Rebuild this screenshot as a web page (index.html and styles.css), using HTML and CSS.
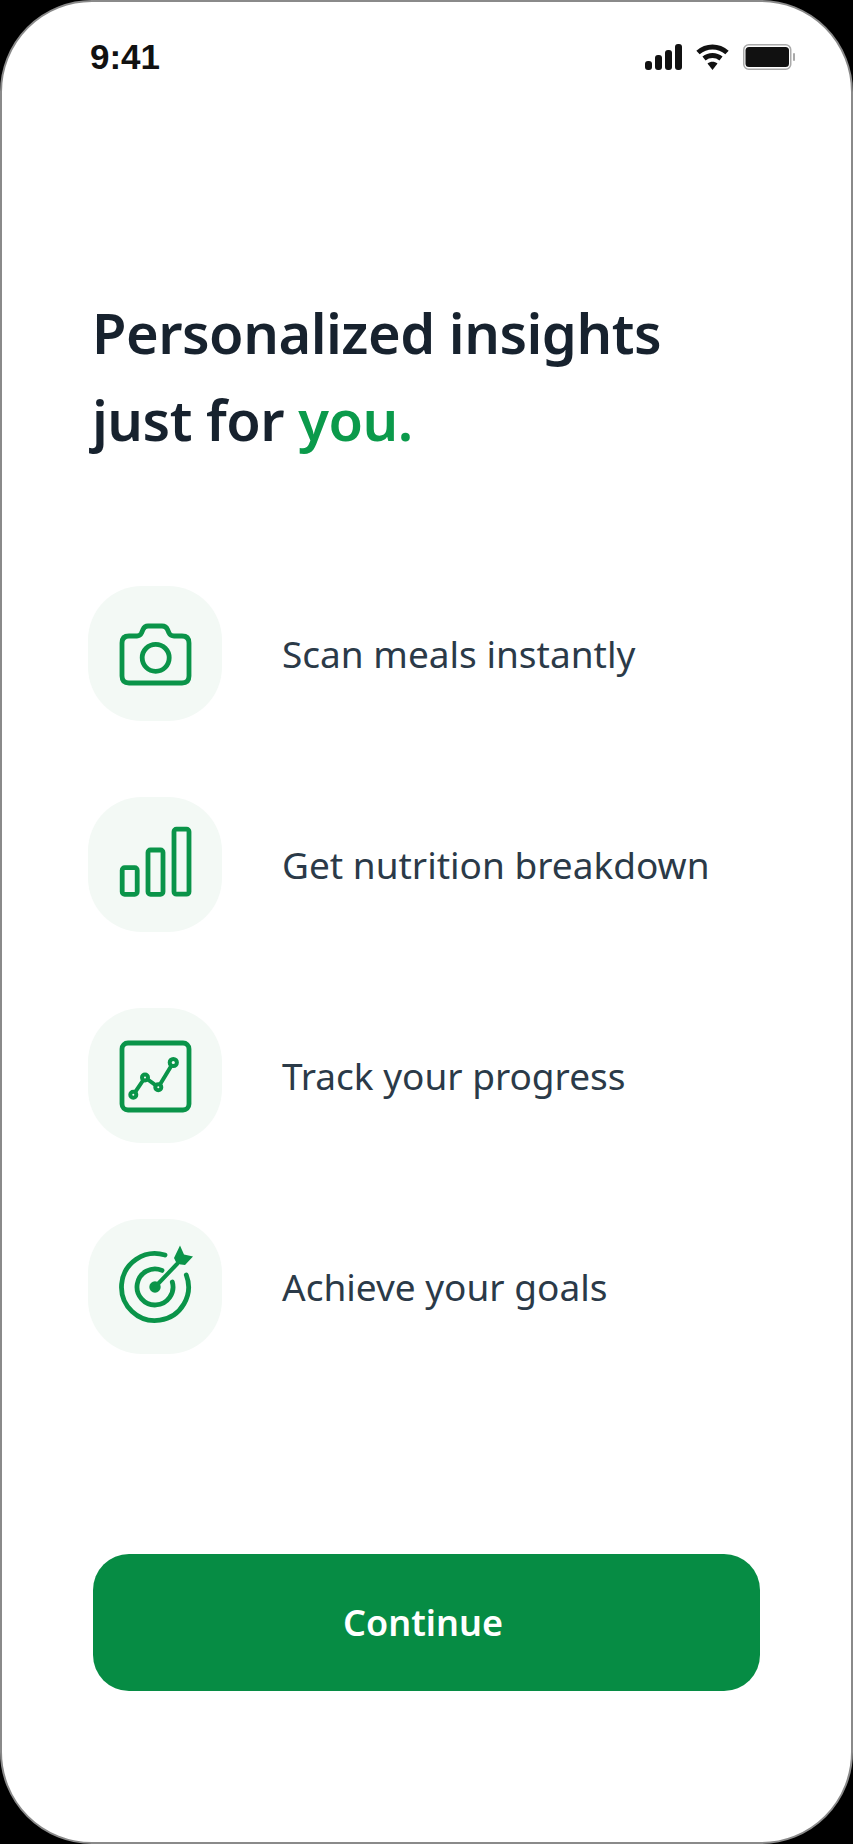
FILE: index.html
```html
<!DOCTYPE html>
<html lang="en">
<head>
    <meta charset="UTF-8">
    <title>Personalized insights</title>
    <link rel="stylesheet" href="styles.css">
</head>
<body>
    <div class="screen">
        <div class="status-bar">
            <span class="time">9:41</span>
            <div class="status-icons">
                <svg class="signal" width="37" height="26" viewBox="0 0 37 26">
                    <rect x="0" y="17" width="7" height="9" rx="3" />
                    <rect x="10" y="11" width="7" height="15" rx="3" />
                    <rect x="20" y="6" width="7" height="20" rx="3" />
                    <rect x="30" y="0" width="7" height="26" rx="3" />
                </svg>
                <svg class="wifi" width="33" height="26" viewBox="0 0 33 26">
                    <path d="M2 8.5C10.5 1 22.5 1 31 8.5" />
                    <path d="M8 14.5C13 10.5 20 10.5 25 14.5" />
                    <path class="wifi-dot" d="M11.5 19.5C14.5 17 18.5 17 21.5 19.5L16.5 26Z" />
                </svg>
                <svg class="battery" width="54" height="26" viewBox="0 0 54 26">
                    <rect class="battery-case" x="0.75" y="0.75" width="47" height="24.5" rx="5" />
                    <rect x="2.5" y="3" width="43.5" height="20" rx="3.5" />
                    <rect class="battery-cap" x="50" y="9" width="2" height="8" rx="1" />
                </svg>
            </div>
        </div>

        <h1 class="title">Personalized insights<br>just for <span class="accent">you.</span></h1>

        <ul class="features">
            <li class="feature">
                <div class="feature-icon">
                    <svg width="80" height="80" viewBox="0 0 80 80">
                        <path d="M14 22H22Q25 22 26.5 19L28 15.5Q29.5 12 33 12H47Q51 12 52.5 15.5L54 19Q55.5 22 59 22H67Q74 22 74 29V62Q74 69 67 69H14Q7 69 7 62V29Q7 22 14 22Z" />
                        <circle cx="40.7" cy="43.8" r="13.5" />
                    </svg>
                </div>
                <span class="feature-text">Scan meals instantly</span>
            </li>
            <li class="feature">
                <div class="feature-icon">
                    <svg width="80" height="80" viewBox="0 0 80 80">
                        <rect x="7.2" y="42.7" width="15" height="26.6" rx="2.5" />
                        <rect x="33" y="25" width="15" height="44.3" rx="2.5" />
                        <rect x="59" y="4.2" width="15" height="65" rx="2.5" />
                    </svg>
                </div>
                <span class="feature-text">Get nutrition breakdown</span>
            </li>
            <li class="feature">
                <div class="feature-icon">
                    <svg width="80" height="80" viewBox="0 0 80 80">
                        <rect x="7" y="7" width="67" height="67" rx="6" />
                        <path class="thin" d="M18.3 58.8L30 41.5L43.3 51.2L58.3 26.5" />
                        <circle class="node" cx="18.3" cy="58.8" r="3" />
                        <circle class="node" cx="30" cy="41.5" r="3" />
                        <circle class="node" cx="43.3" cy="51.2" r="3" />
                        <circle class="node" cx="58.3" cy="26.5" r="3.6" />
                    </svg>
                </div>
                <span class="feature-text">Track your progress</span>
            </li>
            <li class="feature">
                <div class="feature-icon">
                    <svg width="80" height="80" viewBox="0 0 80 80">
                        <path d="M71.3 28A33.5 33.5 0 1 1 50 8" />
                        <path d="M57.3 35A18 18 0 1 1 47 23.4" />
                        <circle class="solid" cx="40" cy="40" r="5.7" />
                        <path class="thin" d="M40 40L62 17" />
                        <path class="solid" d="M59 11L65 -1.5L69 7.5L78 9.5L70 18L62 17Z" />
                    </svg>
                </div>
                <span class="feature-text">Achieve your goals</span>
            </li>
        </ul>

        <button class="continue-btn" type="button">Continue</button>
    </div>
</body>
</html>
```

FILE: styles.css
```css
* {
    box-sizing: border-box;
}
body {
    margin: 0;
    background: #000;
    font-family: "Noto Sans", Inter, sans-serif;
}
.screen {
    height: 1844px;
    background: #fff;
    border: 2px solid #8a8a8a;
    border-radius: 92px;
    padding: 0 92px 0 86px;
    overflow: hidden;
}

/* status bar */
.status-bar {
    display: flex;
    justify-content: space-between;
    align-items: center;
    height: 26px;
    margin: 42px -38px 0 2px;
}
.time {
    font-family: "Liberation Sans", Arial, sans-serif;
    font-weight: 700;
    font-size: 35px;
    color: #111;
}
.status-icons {
    display: flex;
    align-items: center;
    gap: 14px;
}
.status-icons svg {
    display: block;
}
.signal rect {
    fill: #111;
}
.wifi path {
    fill: none;
    stroke: #111;
    stroke-width: 5;
}
.wifi .wifi-dot {
    fill: #111;
    stroke: none;
}
.battery rect {
    fill: #111;
}
.battery .battery-case {
    fill: none;
    stroke: #aaa;
    stroke-width: 1.5;
}
.battery .battery-cap {
    fill: #aaa;
}

/* heading */
.title {
    margin: 219px 0 0 4px;
    font-size: 56px;
    font-weight: 600;
    line-height: 87px;
    letter-spacing: -0.5px;
    color: #17222e;
}
.accent {
    color: #0b9a4b;
}

/* feature rows */
.features {
    list-style: none;
    margin: 123px 0 0;
    padding: 0;
    display: flex;
    flex-direction: column;
    gap: 76px;
}
.feature {
    display: flex;
    align-items: center;
    gap: 60px;
}
.feature-icon {
    width: 134px;
    height: 135px;
    flex-shrink: 0;
    display: flex;
    align-items: center;
    justify-content: center;
    background: #f3f9f5;
    border-radius: 54px;
}
.feature-icon svg {
    overflow: visible;
    fill: none;
    stroke: #0a9449;
    stroke-width: 4.8;
    stroke-linejoin: round;
    stroke-linecap: round;
}
.feature-icon .thin {
    stroke-width: 4;
}
.feature-icon .node {
    fill: #f3f9f5;
    stroke-width: 4;
}
.feature-icon .solid {
    fill: #0a9449;
    stroke: none;
}
.feature-text {
    font-size: 37px;
    color: #2b3a48;
}

/* button */
.continue-btn {
    display: block;
    width: 667px;
    height: 137px;
    margin: 200px 0 0 5px;
    padding: 0 7px 0 0;
    border: none;
    border-radius: 36px;
    background: #068c44;
    color: #fff;
    font-family: inherit;
    font-size: 36px;
    font-weight: 600;
}
```
